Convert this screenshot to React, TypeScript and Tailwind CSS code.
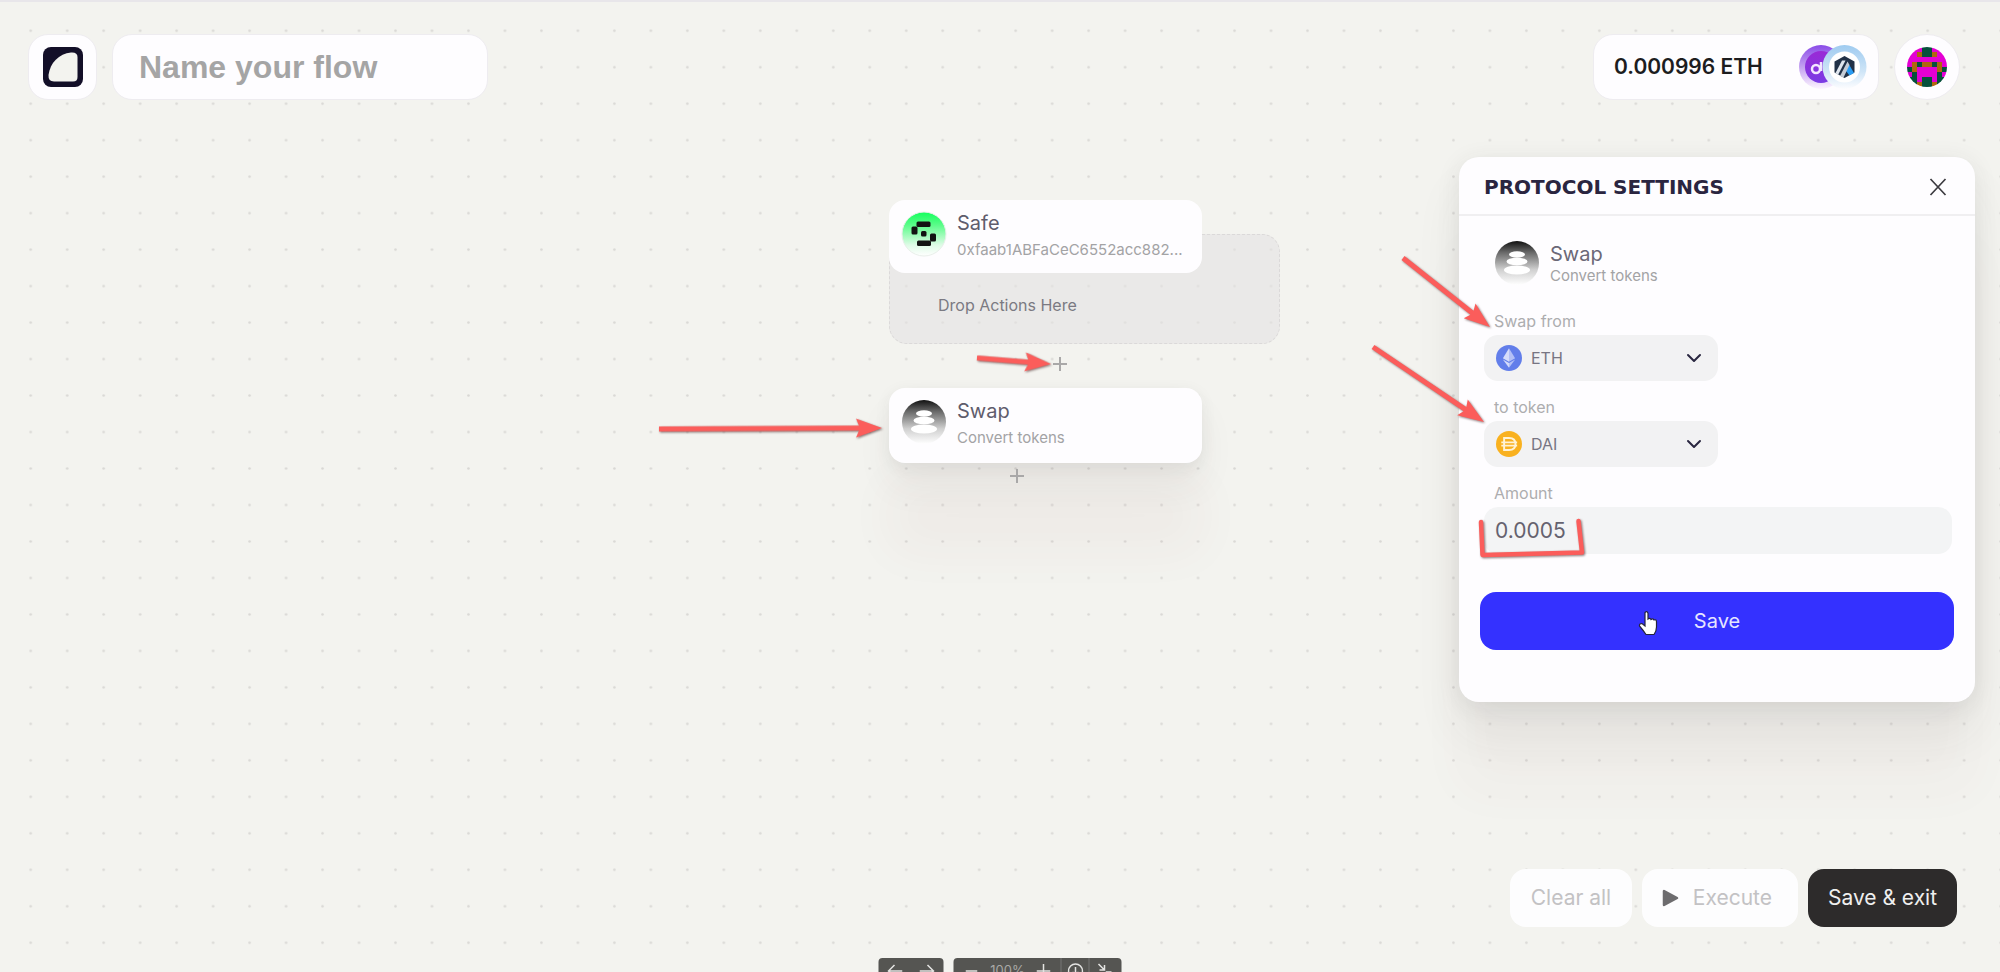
import { useState } from 'react';
import type { ReactNode } from 'react';
import { FiChevronDown } from 'react-icons/fi';

const IDENTICON = [
    'mmmggmmm',
    'mmoggomm',
    'mmmmmmmm',
    'mogoogom',
    'gommmmog',
    'mgmmmmgm',
    'ggmggmgg',
    'mgoggogm',
];

const IDENTICON_COLORS: Record<string, string> = {
    m: '#e400d3',
    g: '#07503c',
    o: '#b0660f',
};

export default function App() {
    return (
        <div className="relative flex h-screen min-h-[900px] flex-col overflow-hidden border-t-2 border-[#e8e6ea] bg-[#f3f3ef] font-['Inter','Liberation_Sans',sans-serif]">
            <DotGrid />
            <FlowCanvas />
            <Header />
            <main className="relative mt-[57px] flex flex-1 items-start justify-end pr-[25px]">
                <SettingsPanel />
            </main>
            <Footer />
            <ZoomBar />
            <Annotations />
        </div>
    );
}

function DotGrid() {
    return (
        <svg className="absolute inset-0 h-full w-full" aria-hidden="true">
            <defs>
                <pattern id="dots" x="12.5" y="10.5" width="36.48" height="36.48" patternUnits="userSpaceOnUse">
                    <circle cx="18.2" cy="18.2" r="1.3" fill="#d9d8d5" />
                </pattern>
            </defs>
            <rect width="100%" height="100%" fill="url(#dots)" />
        </svg>
    );
}

function Header() {
    const [name, setName] = useState('');

    return (
        <header className="relative flex items-center justify-between pt-8 pr-10 pl-7">
            <div className="flex items-center gap-[15px]">
                <a href="#" aria-label="Home" className="flex h-[66px] w-[69px] items-center justify-center rounded-[20px] border border-[#eeecf0] bg-[#fefdff]">
                    <svg width="40" height="40" viewBox="0 0 40 40">
                        <rect width="40" height="40" rx="8" fill="#130f28" />
                        <path d="M5.500 28C7 16 16 6.500 28 5.500Q34.500 5 34.500 10V30Q34.500 34.500 30 34.500H11Q5 34.500 5.500 28Z" fill="#f3f3ef" />
                    </svg>
                </a>
                <input
                    aria-label="Flow name"
                    placeholder="Name your flow"
                    value={name}
                    onChange={(e) => setName(e.target.value)}
                    className="h-[66px] w-[376px] rounded-[20px] border border-[#eeecf0] bg-[#fefdff] px-[26px] font-['Liberation_Sans',sans-serif] text-[32px] font-bold text-[#a5a5a5] outline-none placeholder:text-[#a5a5a5]"
                />
            </div>
            <div className="flex items-center gap-[15px]">
                <div className="flex h-[66px] w-[286px] items-center justify-between rounded-[20px] border border-[#eeecf0] bg-[#fefdff] pr-[11px] pl-5">
                    <span className="text-[21px] font-semibold text-[#1d1d1f]">0.000996 ETH</span>
                    <Networks />
                </div>
                <button aria-label="Account" className="flex size-[66px] items-center justify-center rounded-full border border-[#eeecf0] bg-[#fefdff]">
                    <Identicon />
                </button>
            </div>
        </header>
    );
}

function Networks() {
    return (
        <svg width="68" height="46" viewBox="0 0 68 46" aria-hidden="true">
            <defs>
                <linearGradient id="polyRing" x1="0" y1="0" x2="0" y2="1">
                    <stop offset="0" stopColor="#8a4be8" />
                    <stop offset="0.5" stopColor="#c3a1f0" />
                    <stop offset="1" stopColor="#fdf5ff" />
                </linearGradient>
                <linearGradient id="polyCore" x1="0" y1="0" x2="0" y2="1">
                    <stop offset="0" stopColor="#9a2ad6" />
                    <stop offset="1" stopColor="#7a3be4" />
                </linearGradient>
                <linearGradient id="arbRing" x1="0" y1="0" x2="0" y2="1">
                    <stop offset="0" stopColor="#9fcbf0" />
                    <stop offset="0.6" stopColor="#cfe5f7" />
                    <stop offset="1" stopColor="#fdfdff" />
                </linearGradient>
            </defs>
            <circle cx="22" cy="23" r="22" fill="url(#polyRing)" />
            <circle cx="22" cy="23" r="16" fill="url(#polyCore)" />
            <circle cx="17" cy="25" r="4" fill="none" stroke="#f3e6ff" strokeWidth="2.500" />
            <path d="M22 18V27" stroke="#f3e6ff" strokeWidth="2.500" />
            <circle cx="45.500" cy="23" r="22" fill="url(#arbRing)" />
            <circle cx="45.500" cy="23" r="15.500" fill="#fff" />
            <path d="M45.500 12L55.500 17.500V28.500L45.500 34L35.500 28.500V17.500Z" fill="#213147" />
            <path d="M47 27L50 20.500L55 29L50.500 31.500Z" fill="#2a9df4" />
            <path d="M36.500 29L43 16.500H46.500L39 31Z" fill="#dfe6ee" />
            <path d="M41 32L48.500 17.500L50.500 21L44.500 33.500Z" fill="#c4ccd6" />
        </svg>
    );
}

function Identicon() {
    return (
        <svg width="40" height="40" viewBox="0 0 8 8" className="rounded-full" shapeRendering="crispEdges" aria-hidden="true">
            {IDENTICON.map((row, y) =>
                row.split('').map((cell, x) => (
                    <rect key={`${x}-${y}`} x={x} y={y} width="1" height="1" fill={IDENTICON_COLORS[cell]} />
                ))
            )}
        </svg>
    );
}

/* Nodes are placed freely on the canvas */
function FlowCanvas() {
    return (
        <div className="absolute inset-0">
            <div className="absolute top-[232px] left-[889px] h-[110px] w-[391px] rounded-[18px] border border-dashed border-[#dbd9d9] bg-[#e4e3e3]/60 pt-[58px] pl-12">
                <p className="text-base text-[#7b7a82]">Drop Actions Here</p>
            </div>
            <FlowNode
                className="absolute top-[198px] left-[889px] h-[73px] w-[313px]"
                icon={<SafeIcon />}
                title="Safe"
                subtitle="0xfaab1ABFaCeC6552acc882..."
            />
            <AddButton className="absolute top-[352px] left-[1050px]" />
            <FlowNode
                className="absolute top-[386px] left-[889px] h-[75px] w-[313px] shadow-[0_4px_16px_rgba(60,50,50,0.07),0_24px_36px_rgba(60,50,50,0.06),0_90px_48px_rgba(120,60,60,0.04)]"
                icon={<SwapIcon />}
                title="Swap"
                subtitle="Convert tokens"
            />
            <AddButton className="absolute top-[464px] left-[1007px]" />
        </div>
    );
}

interface FlowNodeProps {
    className: string;
    icon: ReactNode;
    title: string;
    subtitle: string;
}

function FlowNode({ className, icon, title, subtitle }: FlowNodeProps) {
    return (
        <div className={`${className} flex items-start gap-[10px] rounded-[16px] bg-[#fefdff] px-3 pt-[11px]`}>
            {icon}
            <div className="min-w-0 flex-1">
                <p className="text-xl leading-6 text-[#5f5c6c]">{title}</p>
                <p className="text-[15px] leading-[30px] whitespace-nowrap text-[#a3a3a5]">{subtitle}</p>
            </div>
        </div>
    );
}

function AddButton({ className }: { className: string }) {
    return (
        <button aria-label="Add action" className={`${className} flex size-5 items-center justify-center`}>
            <svg width="14" height="14" viewBox="0 0 14 14">
                <path d="M7 0V14M0 7H14" stroke="#a9a8a8" strokeWidth="2" />
            </svg>
        </button>
    );
}

function SafeIcon() {
    return (
        <svg width="46" height="46" viewBox="0 0 46 46" className="shrink-0" aria-hidden="true">
            <defs>
                <linearGradient id="safeFill" x1="0" y1="0" x2="0" y2="1">
                    <stop offset="0" stopColor="#12ff5c" />
                    <stop offset="0.3" stopColor="#5cfc8a" />
                    <stop offset="0.75" stopColor="#defbe6" />
                    <stop offset="1" stopColor="#fff" />
                </linearGradient>
            </defs>
            <circle cx="23" cy="23" r="22" fill="url(#safeFill)" stroke="#e9efea" />
            <g fill="#121312">
                <rect x="15.500" y="10.500" width="14" height="5.500" rx="1.500" />
                <rect x="10.500" y="15.500" width="6" height="8" rx="1.500" />
                <rect x="20" y="20" width="5.500" height="5.500" rx="1.500" />
                <rect x="29" y="22.500" width="6" height="8" rx="1.500" />
                <rect x="16" y="29.500" width="14" height="5.500" rx="1.500" />
            </g>
        </svg>
    );
}

function SwapIcon() {
    return (
        <svg width="46" height="46" viewBox="0 0 46 46" className="shrink-0" aria-hidden="true">
            <defs>
                <linearGradient id="swapFill" x1="0" y1="0" x2="0" y2="1">
                    <stop offset="0" stopColor="#111" />
                    <stop offset="0.25" stopColor="#666" />
                    <stop offset="0.65" stopColor="#cfcfcf" />
                    <stop offset="1" stopColor="#fff" />
                </linearGradient>
            </defs>
            <circle cx="23" cy="23" r="22" fill="url(#swapFill)" />
            <g fill="#fff">
                <ellipse cx="23" cy="14.500" rx="8" ry="3.200" />
                <ellipse cx="23" cy="21.500" rx="10.500" ry="3.800" />
                <ellipse cx="23" cy="30" rx="13" ry="4.500" />
            </g>
        </svg>
    );
}

function SettingsPanel() {
    const [amount, setAmount] = useState('0.0005');

    return (
        <section className="w-[516px] rounded-[20px] bg-[#fefdff] pb-[52px] shadow-[0_4px_24px_rgba(60,50,50,0.09),0_32px_48px_rgba(60,50,50,0.07),0_90px_48px_rgba(120,60,60,0.03)]">
            <div className="flex h-[59px] items-center justify-between border-b-2 border-[#f0eff1] pt-0.5 pr-7 pl-[25px]">
                <h2 className="font-['DejaVu_Sans',sans-serif] text-xl font-bold text-[#2a2540]">PROTOCOL SETTINGS</h2>
                <button aria-label="Close">
                    <svg width="18" height="18" viewBox="0 0 18 18">
                        <path d="M1.500 1L16.500 17M16.500 1L1.500 17" stroke="#3c3b40" strokeWidth="1.700" />
                    </svg>
                </button>
            </div>
            <form className="flex flex-col px-[21px]" onSubmit={(e) => e.preventDefault()}>
                <div className="mt-6 ml-[14px] flex items-center gap-[10px]">
                    <SwapIcon />
                    <div className="pt-0.5">
                        <p className="text-xl leading-6 text-[#6b6877]">Swap</p>
                        <p className="text-[15px] leading-5 text-[#a3a3a5]">Convert tokens</p>
                    </div>
                </div>
                <TokenSelect id="from" label="Swap from" tokens={['ETH', 'DAI']} initial="ETH" className="mt-[23px]" />
                <TokenSelect id="to" label="to token" tokens={['DAI', 'ETH']} initial="DAI" className="mt-[14px]" />
                <div className="mt-[14px] flex flex-col gap-0.5 pl-1 pr-0.5">
                    <label htmlFor="amount" className="ml-[10px] text-base leading-6 text-[#adadaf]">Amount</label>
                    <input
                        id="amount"
                        value={amount}
                        onChange={(e) => setAmount(e.target.value)}
                        className="h-[47px] rounded-[14px] bg-[#f3f4f5] px-[11px] text-[21px] text-[#65626f] outline-none"
                    />
                </div>
                <button className="mt-[38px] h-[58px] rounded-[16px] bg-[#3431ff] text-xl text-[#e6e5ff]">Save</button>
            </form>
        </section>
    );
}

interface TokenSelectProps {
    id: string;
    label: string;
    tokens: string[];
    initial: string;
    className: string;
}

function TokenSelect({ id, label, tokens, initial, className }: TokenSelectProps) {
    const [token, setToken] = useState(initial);

    return (
        <div className={`${className} flex flex-col items-start gap-0.5 px-1`}>
            <label htmlFor={id} className="ml-[10px] text-base leading-6 text-[#adadaf]">{label}</label>
            <div className="relative flex">
                <select
                    id={id}
                    value={token}
                    onChange={(e) => setToken(e.target.value)}
                    className="h-[46px] w-[234px] appearance-none rounded-[14px] bg-[#f2f2f3] pr-12 pl-[47px] text-base text-[#777582] outline-none"
                >
                    {tokens.map((t) => (
                        <option key={t}>{t}</option>
                    ))}
                </select>
                <span className="pointer-events-none absolute inset-y-0 left-3 flex items-center">
                    {token === 'ETH' ? <EthIcon /> : <DaiIcon />}
                </span>
                <FiChevronDown className="pointer-events-none absolute inset-y-0 right-3 my-auto size-6 text-[#2a2740]" />
            </div>
        </div>
    );
}

function EthIcon() {
    return (
        <svg width="26" height="26" viewBox="0 0 32 32" aria-hidden="true">
            <circle cx="16" cy="16" r="16" fill="#627eea" />
            <path d="M16 4L8.500 16.200L16 20.700Z" fill="#d5dcfa" />
            <path d="M16 4L23.500 16.200L16 20.700Z" fill="#b3c0f6" />
            <path d="M8.500 17.700L16 28V22.200Z" fill="#d5dcfa" />
            <path d="M23.500 17.700L16 28V22.200Z" fill="#b3c0f6" />
        </svg>
    );
}

function DaiIcon() {
    return (
        <svg width="26" height="26" viewBox="0 0 32 32" fill="none" aria-hidden="true">
            <circle cx="16" cy="16" r="16" fill="#f9b11f" />
            <path d="M10 8.500H16C21 8.500 24 11.500 24 16S21 23.500 16 23.500H10Z" stroke="#fff3d6" strokeWidth="2.400" />
            <path d="M6.500 14H26M6.500 18H26" stroke="#fff3d6" strokeWidth="2" />
        </svg>
    );
}

function Footer() {
    return (
        <footer className="relative flex justify-end gap-[10px] pr-[43px] pb-[45px]">
            <button className="h-[58px] w-[122px] rounded-[16px] bg-[#fdfdfe] text-[21px] text-[#c3c2c4]">Clear all</button>
            <button className="flex h-[58px] w-[156px] items-center justify-between rounded-[16px] bg-[#fdfdfe] pr-[26px] pl-[20px] text-[21px] text-[#c3c2c4]">
                <svg width="17" height="18" viewBox="0 0 17 18" aria-hidden="true">
                    <path d="M2 2V16L15 9Z" fill="#6d6c6e" stroke="#6d6c6e" strokeWidth="2.500" strokeLinejoin="round" />
                </svg>
                Execute
            </button>
            <button className="h-[58px] w-[149px] rounded-[16px] bg-[#2d2b2b] text-[21px] text-[#efefef]">Save &amp; exit</button>
        </footer>
    );
}

/* Toolbar sits half below the fold */
function ZoomBar() {
    return (
        <div className="absolute -bottom-3 left-1/2 flex h-[26px] -translate-x-1/2 gap-[10px] text-[#e4e4e2]">
            <div className="flex w-[65px] items-center justify-around rounded bg-[#555552]">
                <button aria-label="Undo">
                    <svg width="16" height="14" viewBox="0 0 16 14" fill="none" stroke="currentColor" strokeWidth="1.500">
                        <path d="M16 7H2M8 1L2 7L8 13" />
                    </svg>
                </button>
                <button aria-label="Redo">
                    <svg width="16" height="14" viewBox="0 0 16 14" fill="none" stroke="currentColor" strokeWidth="1.500">
                        <path d="M0 7H14M8 1L14 7L8 13" />
                    </svg>
                </button>
            </div>
            <div className="flex w-[168px] items-stretch rounded bg-[#555552]">
                <button aria-label="Zoom out" className="flex w-9 items-center justify-center">
                    <svg width="12" height="12" viewBox="0 0 12 12" stroke="currentColor" strokeWidth="1.500">
                        <path d="M0 6H12" />
                    </svg>
                </button>
                <span className="flex w-9 items-center justify-center text-[13px] text-[#a9a9a6]">100%</span>
                <button aria-label="Zoom in" className="flex flex-1 items-center justify-center">
                    <svg width="14" height="14" viewBox="0 0 14 14" stroke="currentColor" strokeWidth="1.500">
                        <path d="M0 7H14M7 0V14" />
                    </svg>
                </button>
                <button aria-label="Reset zoom" className="flex w-[29px] items-center justify-center border-x border-[#777774]">
                    <svg width="16" height="16" viewBox="0 0 16 16" fill="none" stroke="currentColor" strokeWidth="1.500">
                        <circle cx="8" cy="8" r="7" />
                        <path d="M8 4V12M5 9L8 12L11 9" />
                    </svg>
                </button>
                <button aria-label="Fit to screen" className="flex w-8 items-center justify-center">
                    <svg width="16" height="16" viewBox="0 0 16 16" fill="none" stroke="currentColor" strokeWidth="1.500">
                        <path d="M1 1L7 7M7 2V7H2M15 15L9 9M9 14V9H14" />
                    </svg>
                </button>
            </div>
        </div>
    );
}

interface ArrowProps {
    from: [number, number];
    to: [number, number];
}

function Arrow({ from, to }: ArrowProps) {
    const length = Math.hypot(to[0] - from[0], to[1] - from[1]);
    const angle = (Math.atan2(to[1] - from[1], to[0] - from[0]) * 180) / Math.PI;
    const head = length - 26;

    return (
        <path
            transform={`translate(${from[0]} ${from[1]}) rotate(${angle})`}
            d={`M0 -2.500H${head + 3}L${head} -9.500L${length} 0L${head} 9.500L${head + 3} 2.500H0Z`}
        />
    );
}

function Annotations() {
    return (
        <svg className="pointer-events-none absolute -top-0.5 left-0 h-full w-full overflow-visible" aria-hidden="true">
            <g fill="#fb5d5b" className="drop-shadow-[1px_1px_1px_rgba(60,30,30,0.6)]">
                <Arrow from={[977, 358]} to={[1051, 364]} />
                <Arrow from={[659, 429]} to={[882, 428]} />
                <Arrow from={[1403, 258]} to={[1490, 327]} />
                <Arrow from={[1373, 347]} to={[1484, 422]} />
                <path
                    d="M1481 522L1482.500 555L1582 552.500L1578.500 521"
                    fill="none"
                    stroke="#fb5d5b"
                    strokeWidth="4.500"
                    strokeLinecap="round"
                    strokeLinejoin="round"
                />
            </g>
            <path
                d="M1645 613.500Q1647.500 611.500 1648 614.500V620Q1650 618.500 1651 620.500Q1653 619 1654 621Q1656.500 620 1656.500 623V628Q1656.500 632 1654 635.500H1646Q1643 631 1639.500 627Q1639 624.500 1642 624.500L1645 627Z"
                transform="translate(0 -1)"
                fill="#fff"
                stroke="#25243a"
                strokeWidth="1.200"
            />
        </svg>
    );
}
